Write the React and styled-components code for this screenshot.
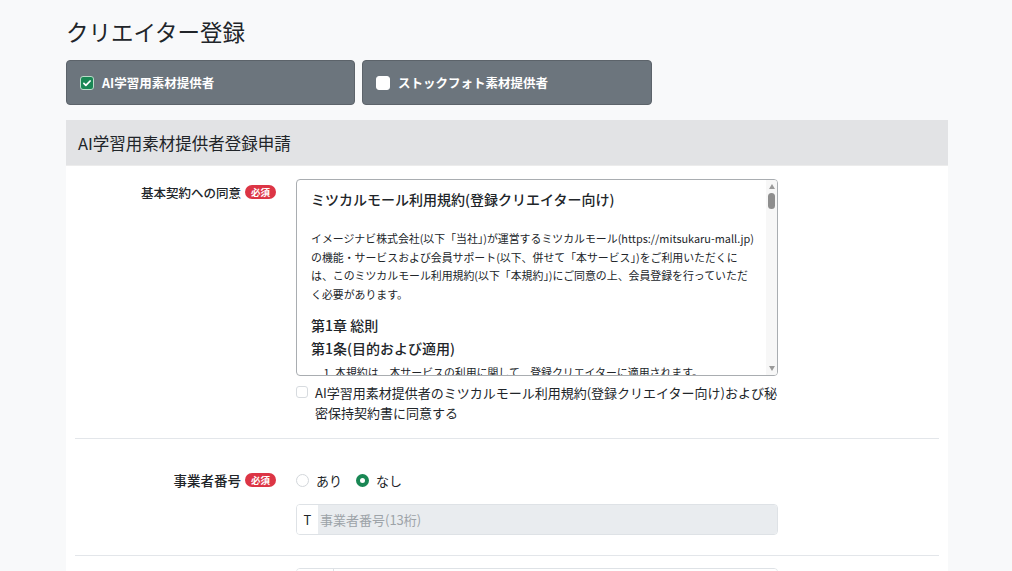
import React, { useState } from 'react';
import styled, { createGlobalStyle } from 'styled-components';

const GlobalStyle = createGlobalStyle`
  html, body {
    margin: 0;
    padding: 0;
    background: #f8f9fa;
    color: #212529;
    font-family: "Noto Sans CJK JP", "Noto Sans", sans-serif;
  }
`;

const Page = styled.div`
  padding: 16px 64px 0 66px;
`;

const Title = styled.h1`
  margin: 0;
  font-size: 22.5px;
  font-weight: 400;
  line-height: 30px;
`;

const TypeTabs = styled.div`
  display: grid;
  grid-template-columns: 289px 290px;
  gap: 7px;
  margin-top: 14px;
`;

const TypeButton = styled.label`
  display: flex;
  align-items: center;
  gap: 8px;
  height: 45px;
  padding: 0 13px;
  box-sizing: border-box;
  background: #6c757d;
  border: 1px solid #5c636a;
  border-radius: 4px;
  color: #fff;
  font-size: 12.5px;
  font-weight: 700;
  cursor: pointer;
`;

const Box = styled.span`
  display: inline-flex;
  align-items: center;
  justify-content: center;
  width: 14px;
  height: 14px;
  box-sizing: border-box;
  border-radius: 3px;
  background: ${({ checked }) => (checked ? '#198754' : '#fff')};
  border: 1px solid ${({ checked }) => (checked ? '#b9dcc8' : '#fff')};
`;

const Card = styled.section`
  margin-top: 15px;
  background: #fff;
`;

const CardHeader = styled.div`
  height: 45px;
  display: flex;
  align-items: center;
  padding: 0 12px;
  background: #e2e3e5;
  border-bottom: 1px solid #ececec;
  font-size: 16.5px;
  font-weight: 400;
`;

const CardBody = styled.div`
  padding: 0 9px;
`;

const FormRow = styled.div`
  display: grid;
  grid-template-columns: 211px 482px;
  column-gap: 10px;
  padding: ${({ pad }) => pad};
  border-bottom: ${({ last }) => (last ? 'none' : '1px solid #e3e6ea')};
`;

const Label = styled.div`
  display: flex;
  justify-content: flex-end;
  align-items: center;
  gap: 4px;
  padding-right: 10px;
  height: ${({ h }) => h || 'auto'};
  font-size: ${({ size }) => size || '12.5px'};
  font-weight: 500;
`;

const Required = styled.span`
  display: inline-block;
  background: #dc3545;
  color: #fff;
  font-size: 9.5px;
  font-weight: 700;
  line-height: 14px;
  padding: 0 6px;
  border-radius: 7px;
`;

const TermsFrame = styled.div`
  position: relative;
  height: 197px;
  box-sizing: border-box;
  border: 1px solid #a9adb1;
  border-radius: 4px;
  overflow: hidden;
`;

const TermsContent = styled.div`
  padding: 8px 23px 0 14px;
`;

const ScrollTrack = styled.div`
  position: absolute;
  top: 0;
  right: 0;
  bottom: 0;
  width: 11px;
  display: flex;
  flex-direction: column;
  align-items: center;
  background: #f7f7f7;
`;

const ScrollArrow = styled.span`
  width: 0;
  height: 0;
  margin: ${({ down }) => (down ? 'auto 0 4px' : '4px 0 0')};
  border-left: 3.5px solid transparent;
  border-right: 3.5px solid transparent;
  border-bottom: ${({ down }) => (down ? 'none' : '5px solid #9a9a9a')};
  border-top: ${({ down }) => (down ? '5px solid #9a9a9a' : 'none')};
`;

const ScrollThumb = styled.span`
  width: 7px;
  height: 16px;
  margin-top: 4px;
  border-radius: 4px;
  background: #8e8e8e;
`;

const TermsTitle = styled.h2`
  margin: 0;
  font-size: 14px;
  font-weight: 500;
  line-height: 22px;
`;

const TermsText = styled.p`
  margin: 19px 0 0;
  font-size: 10.9px;
  line-height: 18.7px;
`;

const Chapter = styled.h3`
  margin: ${({ first }) => (first ? '10px' : '1px')} 0 0;
  font-size: 14px;
  font-weight: 500;
  line-height: 22px;
`;

const TermsList = styled.ol`
  margin: 3px 0 0;
  padding-left: 24px;
  font-size: 10.9px;
  line-height: 20px;
`;

const AgreeLine = styled.label`
  display: flex;
  align-items: flex-start;
  gap: 7px;
  margin-top: 7px;
  font-size: 13px;
  line-height: 20px;
`;

const SmallCheck = styled.span`
  flex: none;
  width: 12px;
  height: 12px;
  margin-top: 3px;
  box-sizing: border-box;
  border: 1px solid #d7dbdf;
  border-radius: 3px;
  background: #fff;
`;

const RadioGroup = styled.div`
  display: flex;
  align-items: center;
  gap: 14px;
  height: 20px;
  font-size: 13px;
`;

const RadioOption = styled.label`
  display: flex;
  align-items: center;
  gap: 7px;
  cursor: pointer;
`;

const RadioDot = styled.span`
  width: 13px;
  height: 13px;
  box-sizing: border-box;
  border-radius: 50%;
  border: ${({ on }) => (on ? '4px solid #198754' : '1px solid #d3d7db')};
  background: #fff;
`;

const InputGroup = styled.div`
  display: flex;
  height: 31px;
  margin-top: ${({ mt }) => mt || '0'};
  box-sizing: border-box;
  border: 1px solid #dee2e6;
  border-radius: 4px;
  overflow: hidden;
  font-size: 13px;
`;

const Addon = styled.span`
  display: flex;
  align-items: center;
  justify-content: center;
  width: ${({ w }) => w || '21px'};
  background: #fff;
  border-right: ${({ divided }) => (divided ? '1px solid #dee2e6' : 'none')};
`;

const TextInput = styled.input`
  flex: 1;
  min-width: 0;
  border: none;
  outline: none;
  padding: 0 2px;
  font: inherit;
  color: #212529;
  background: ${({ disabled }) => (disabled ? '#e9ecef' : '#fff')};

  &::placeholder {
    color: #9da3a8;
  }
`;

const CheckMark = () => (
  <svg width="10" height="10" viewBox="0 0 16 16">
    <path d="M3 8.5l3.2 3.2L13 4.8" fill="none" stroke="#fff" strokeWidth="2.8" strokeLinecap="round" strokeLinejoin="round" />
  </svg>
);

const App = () => {
  const [types, setTypes] = useState({ ai: true, stock: false });
  const [hasNumber, setHasNumber] = useState(false);

  return (
    <>
      <GlobalStyle />
      <Page>
        <Title>クリエイター登録</Title>
        <TypeTabs>
          <TypeButton onClick={() => setTypes({ ...types, ai: !types.ai })}>
            <Box checked={types.ai}>{types.ai && <CheckMark />}</Box>
            AI学習用素材提供者
          </TypeButton>
          <TypeButton onClick={() => setTypes({ ...types, stock: !types.stock })}>
            <Box checked={types.stock}>{types.stock && <CheckMark />}</Box>
            ストックフォト素材提供者
          </TypeButton>
        </TypeTabs>

        <Card>
          <CardHeader>AI学習用素材提供者登録申請</CardHeader>
          <CardBody>
            <FormRow pad="13px 0 15px">
              <Label h="26px">
                基本契約への同意<Required>必須</Required>
              </Label>
              <div>
                <TermsFrame>
                  <TermsContent>
                    <TermsTitle>ミツカルモール利用規約(登録クリエイター向け)</TermsTitle>
                    <TermsText>
                      イメージナビ株式会社(以下「当社」)が運営するミツカルモール(https://mitsukaru-mall.jp)の機能・サービスおよび会員サポート(以下、併せて「本サービス」)をご利用いただくには、このミツカルモール利用規約(以下「本規約」)にご同意の上、会員登録を行っていただく必要があります。
                    </TermsText>
                    <Chapter first>第1章 総則</Chapter>
                    <Chapter>第1条(目的および適用)</Chapter>
                    <TermsList>
                      <li>本規約は、本サービスの利用に関して、登録クリエイターに適用されます。</li>
                      <li>当社が本サービス上で掲載する個別規定は、本規約の一部を構成します。</li>
                    </TermsList>
                  </TermsContent>
                  <ScrollTrack>
                    <ScrollArrow />
                    <ScrollThumb />
                    <ScrollArrow down />
                  </ScrollTrack>
                </TermsFrame>
                <AgreeLine>
                  <SmallCheck />
                  <span>AI学習用素材提供者のミツカルモール利用規約(登録クリエイター向け)および秘密保持契約書に同意する</span>
                </AgreeLine>
              </div>
            </FormRow>

            <FormRow pad="31px 0 20px">
              <Label h="20px" size="13.5px">
                事業者番号<Required>必須</Required>
              </Label>
              <div>
                <RadioGroup>
                  <RadioOption onClick={() => setHasNumber(true)}>
                    <RadioDot on={hasNumber} />あり
                  </RadioOption>
                  <RadioOption onClick={() => setHasNumber(false)}>
                    <RadioDot on={!hasNumber} />なし
                  </RadioOption>
                </RadioGroup>
                <InputGroup mt="14px">
                  <Addon>T</Addon>
                  <TextInput disabled={!hasNumber} placeholder="事業者番号(13桁)" />
                </InputGroup>
              </div>
            </FormRow>

            <FormRow pad="12px 0 20px" last>
              <Label h="31px" />
              <div>
                <InputGroup>
                  <Addon w="36px" divided />
                  <TextInput />
                </InputGroup>
              </div>
            </FormRow>
          </CardBody>
        </Card>
      </Page>
    </>
  );
};

export default App;
